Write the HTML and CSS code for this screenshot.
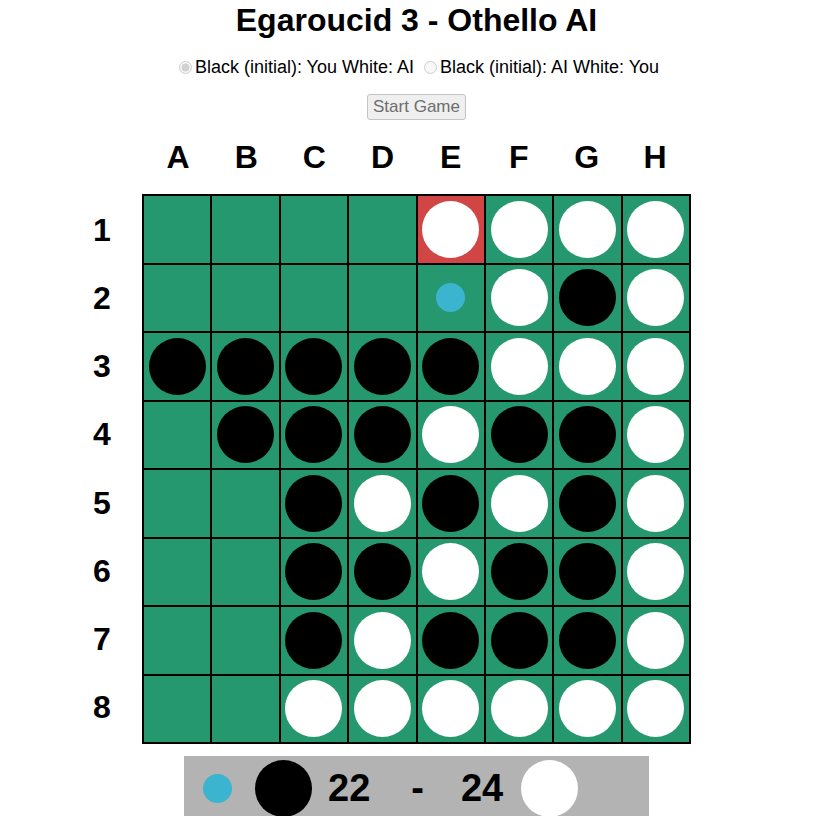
FILE: index.html
```html
<!DOCTYPE html>
<html lang="en">
<head>
<meta charset="utf-8">
<title>Egaroucid 3 - Othello AI</title>
<link rel="stylesheet" href="styles.css">
</head>
<body>
<div class="page">
  <h1 class="title">Egaroucid 3 - Othello AI</h1>
  <div class="modes">
    <label class="mode"><input type="radio" name="mode" checked disabled>Black (initial): You White: AI</label>
    <label class="mode"><input type="radio" name="mode" disabled>Black (initial): AI White: You</label>
  </div>
  <div class="actions"><button class="start" disabled>Start Game</button></div>

  <div class="board-wrap">
    <div class="corner"></div>
    <div class="col-labels">
      <span>A</span><span>B</span><span>C</span><span>D</span><span>E</span><span>F</span><span>G</span><span>H</span>
    </div>
    <div class="corner"></div>
    <div class="row-labels">
      <span>1</span><span>2</span><span>3</span><span>4</span><span>5</span><span>6</span><span>7</span><span>8</span>
    </div>
    <div class="board">
      <!-- row 1 -->
      <div class="cell"></div><div class="cell"></div><div class="cell"></div><div class="cell"></div>
      <div class="cell last"><i class="disc white"></i></div><div class="cell"><i class="disc white"></i></div><div class="cell"><i class="disc white"></i></div><div class="cell"><i class="disc white"></i></div>
      <!-- row 2 -->
      <div class="cell"></div><div class="cell"></div><div class="cell"></div><div class="cell"></div>
      <div class="cell"><i class="hint"></i></div><div class="cell"><i class="disc white"></i></div><div class="cell"><i class="disc black"></i></div><div class="cell"><i class="disc white"></i></div>
      <!-- row 3 -->
      <div class="cell"><i class="disc black"></i></div><div class="cell"><i class="disc black"></i></div><div class="cell"><i class="disc black"></i></div><div class="cell"><i class="disc black"></i></div>
      <div class="cell"><i class="disc black"></i></div><div class="cell"><i class="disc white"></i></div><div class="cell"><i class="disc white"></i></div><div class="cell"><i class="disc white"></i></div>
      <!-- row 4 -->
      <div class="cell"></div><div class="cell"><i class="disc black"></i></div><div class="cell"><i class="disc black"></i></div><div class="cell"><i class="disc black"></i></div>
      <div class="cell"><i class="disc white"></i></div><div class="cell"><i class="disc black"></i></div><div class="cell"><i class="disc black"></i></div><div class="cell"><i class="disc white"></i></div>
      <!-- row 5 -->
      <div class="cell"></div><div class="cell"></div><div class="cell"><i class="disc black"></i></div><div class="cell"><i class="disc white"></i></div>
      <div class="cell"><i class="disc black"></i></div><div class="cell"><i class="disc white"></i></div><div class="cell"><i class="disc black"></i></div><div class="cell"><i class="disc white"></i></div>
      <!-- row 6 -->
      <div class="cell"></div><div class="cell"></div><div class="cell"><i class="disc black"></i></div><div class="cell"><i class="disc black"></i></div>
      <div class="cell"><i class="disc white"></i></div><div class="cell"><i class="disc black"></i></div><div class="cell"><i class="disc black"></i></div><div class="cell"><i class="disc white"></i></div>
      <!-- row 7 -->
      <div class="cell"></div><div class="cell"></div><div class="cell"><i class="disc black"></i></div><div class="cell"><i class="disc white"></i></div>
      <div class="cell"><i class="disc black"></i></div><div class="cell"><i class="disc black"></i></div><div class="cell"><i class="disc black"></i></div><div class="cell"><i class="disc white"></i></div>
      <!-- row 8 -->
      <div class="cell"></div><div class="cell"></div><div class="cell"><i class="disc white"></i></div><div class="cell"><i class="disc white"></i></div>
      <div class="cell"><i class="disc white"></i></div><div class="cell"><i class="disc white"></i></div><div class="cell"><i class="disc white"></i></div><div class="cell"><i class="disc white"></i></div>
    </div>
    <div class="corner"></div>
  </div>

  <div class="score">
    <i class="turn"></i>
    <i class="score-disc black"></i>
    <span class="num num-black">22</span>
    <span class="dash">-</span>
    <span class="num num-white">24</span>
    <i class="score-disc white"></i>
  </div>
</div>
</body>
</html>
```

FILE: styles.css
```css
html, body {
  margin: 0;
  padding: 0;
  background: #ffffff;
}

body {
  font-family: "Liberation Sans", Arial, sans-serif;
  color: #000;
  overflow: hidden;
}

.page {
  padding-left: 10px;
  display: flex;
  flex-direction: column;
  align-items: center;
}

.title {
  margin: 2px 0 0 0;
  font-size: 32px;
  font-weight: bold;
  line-height: 37px;
  height: 37px;
}

.modes {
  margin-top: 18px;
  font-size: 18px;
  line-height: 21px;
  height: 21px;
  white-space: nowrap;
}

.mode input {
  margin: 0 3px 0 5px;
  width: 13px;
  height: 13px;
  vertical-align: -1px;
}

.actions {
  margin-top: 16px;
  height: 26px;
}

.start {
  font-family: "Liberation Sans", Arial, sans-serif;
  font-size: 17px;
  height: 26px;
  padding: 0 5px;
  color: #6d6d6d;
  background: #efefef;
  border: 1px solid #c4c4c4;
  border-radius: 3px;
  line-height: 22px;
}

.board-wrap {
  margin-top: 5px;
  display: grid;
  grid-template-columns: 80px 549px 80px;
  grid-template-rows: 69px 550px;
}

.col-labels {
  display: grid;
  grid-template-columns: repeat(8, 1fr);
  padding: 0 2px 5px 2px;
  font-size: 32px;
  font-weight: bold;
}

.col-labels span,
.row-labels span {
  display: flex;
  align-items: center;
  justify-content: center;
}

.row-labels {
  display: grid;
  grid-template-rows: repeat(8, 1fr);
  padding: 2px 0;
  font-size: 32px;
  font-weight: bold;
}

.board {
  display: grid;
  grid-template-columns: repeat(8, 1fr);
  grid-template-rows: repeat(8, 1fr);
  gap: 2px;
  padding: 2px;
  background: #000;
}

.cell {
  background: #26986f;
  display: flex;
  align-items: center;
  justify-content: center;
}

.cell.last {
  background: #d14545;
}

.disc {
  display: block;
  width: 57px;
  height: 57px;
  border-radius: 50%;
}

.disc.white { background: #ffffff; }
.disc.black { background: #000000; }

.hint {
  display: block;
  width: 29px;
  height: 29px;
  border-radius: 50%;
  background: #3bb4d0;
}

.score {
  margin-top: 12px;
  width: 465px;
  height: 66px;
  background: #b3b3b3;
  display: flex;
  align-items: center;
  box-sizing: border-box;
  padding-left: 19px;
  padding-bottom: 2px;
}

.turn {
  display: block;
  width: 29px;
  height: 29px;
  border-radius: 50%;
  background: #3bb4d0;
}

.score-disc {
  display: block;
  width: 57px;
  height: 57px;
  border-radius: 50%;
}

.score-disc.black { background: #000; margin-left: 23px; }
.score-disc.white { background: #fff; margin-left: 18px; }

.num, .dash {
  font-size: 38px;
  font-weight: bold;
  line-height: 44px;
}

.num-black { margin-left: 16px; }
.dash { margin-left: 41px; }
.num-white { margin-left: 37px; }
```
